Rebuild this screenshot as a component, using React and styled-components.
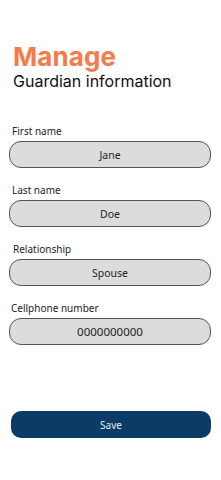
import React from "react";
import styled, { createGlobalStyle } from "styled-components";

const GlobalStyle = createGlobalStyle`
  html, body {
    margin: 0;
    padding: 0;
    background: #ffffff;
  }
  * {
    box-sizing: border-box;
  }
`;

const Page = styled.div`
  width: 221px;
  height: 480px;
  display: flex;
  flex-direction: column;
  padding: 0 10px 0 9px;
  font-family: "Noto Sans", "Open Sans", sans-serif;
`;

const Header = styled.header`
  display: flex;
  flex-direction: column;
  padding: 43px 0 0 4px;
`;

const Title = styled.h1`
  margin: 0;
  font-family: Inter, "Noto Sans", sans-serif;
  font-weight: 700;
  font-size: 26px;
  line-height: 28px;
  color: #f47c4c;
  letter-spacing: 0.1px;
`;

const Subtitle = styled.h2`
  margin: 0;
  font-family: Inter, "Noto Sans", sans-serif;
  font-weight: 400;
  font-size: 16px;
  line-height: 20px;
  color: #111111;
`;

const Form = styled.form`
  display: flex;
  flex-direction: column;
  gap: 16px;
  margin-top: 34px;
`;

const Field = styled.label`
  display: flex;
  flex-direction: column;
  gap: 4px;
`;

const Label = styled.span`
  font-size: 10px;
  line-height: 12px;
  color: #222222;
  padding-left: ${props => props.indent || 3}px;
`;

const Input = styled.input`
  width: 100%;
  height: 27px;
  border: 1.5px solid #555555;
  border-radius: 12px;
  background: #dcdcdc;
  text-align: center;
  font-family: "Noto Sans", "Open Sans", sans-serif;
  font-size: ${props => (props.large ? "11.5px" : "10.5px")};
  color: #222222;
  outline: none;
  padding: 0;
`;

const Save = styled.button`
  margin: auto 0 42px 2px;
  height: 27px;
  border: none;
  border-radius: 10px;
  background: #0b3c68;
  color: #e6e9ee;
  font-family: "Noto Sans", "Open Sans", sans-serif;
  font-size: 10px;
  cursor: pointer;
`;

const fields = [
  { label: "First name", value: "Jane", indent: 3 },
  { label: "Last name", value: "Doe", indent: 3 },
  { label: "Relationship", value: "Spouse", indent: 4 },
  { label: "Cellphone number", value: "0000000000", indent: 2, large: true },
];

export default function App() {
  return (
    <>
      <GlobalStyle />
      <Page>
        <Header>
          <Title>Manage</Title>
          <Subtitle>Guardian information</Subtitle>
        </Header>
        <Form onSubmit={e => e.preventDefault()}>
          {fields.map(f => (
            <Field key={f.label}>
              <Label indent={f.indent}>{f.label}</Label>
              <Input defaultValue={f.value} large={f.large} />
            </Field>
          ))}
        </Form>
        <Save type="button">Save</Save>
      </Page>
    </>
  );
}
